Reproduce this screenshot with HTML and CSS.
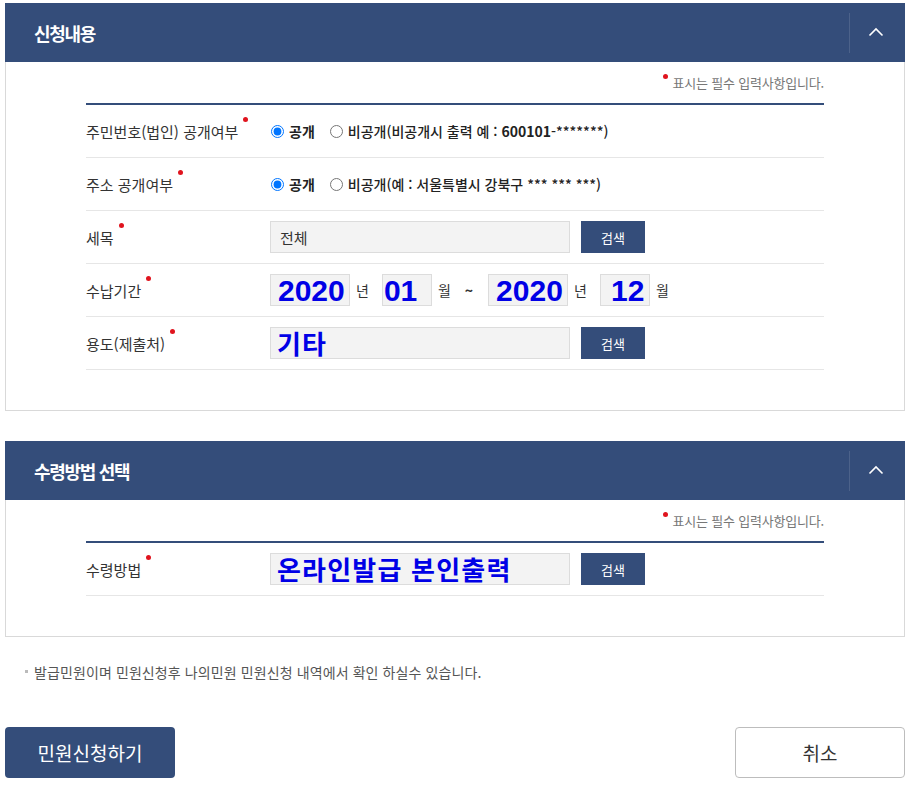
FILE: index.html
```html
<!DOCTYPE html>
<html lang="ko">
<head>
    <meta charset="UTF-8">
    <meta name="viewport" content="width=device-width, initial-scale=1.0">
    <title>민원신청</title>
    <link rel="stylesheet" href="styles.css">
</head>
<body>
    <div class="page">
        <!-- 신청내용 -->
        <section class="panel">
            <div class="panel-head">
                <h2 class="panel-title">신청내용</h2>
                <button class="panel-toggle" type="button" aria-label="접기">
                    <svg width="16" height="10" viewBox="0 0 16 10"><polyline points="1.5,8.5 8,2 14.5,8.5" fill="none" stroke="#fff" stroke-width="1.6"/></svg>
                </button>
            </div>
            <div class="panel-body">
                <p class="req-note"><span class="req-dot">표시는 필수 입력사항입니다.</span></p>
                <div class="form-table">
                    <div class="form-row">
                        <div class="form-label"><span class="req">주민번호(법인) 공개여부</span></div>
                        <div class="field">
                            <label class="radio"><input type="radio" name="open-id" checked><span class="strong">공개</span></label>
                            <label class="radio"><input type="radio" name="open-id"><span>비공개(비공개시 출력 예 : <b>600101</b>-*******)</span></label>
                        </div>
                    </div>
                    <div class="form-row">
                        <div class="form-label"><span class="req">주소 공개여부</span></div>
                        <div class="field">
                            <label class="radio"><input type="radio" name="open-addr" checked><span class="strong">공개</span></label>
                            <label class="radio"><input type="radio" name="open-addr"><span>비공개(예 : 서울특별시 강북구 *** *** ***)</span></label>
                        </div>
                    </div>
                    <div class="form-row">
                        <div class="form-label"><span class="req">세목</span></div>
                        <div class="field">
                            <div class="text-box">전체</div>
                            <button class="btn-search" type="button">검색</button>
                        </div>
                    </div>
                    <div class="form-row">
                        <div class="form-label"><span class="req">수납기간</span></div>
                        <div class="field">
                            <div class="text-box year"><span class="big">2020</span></div>
                            <span class="unit">년</span>
                            <div class="text-box month"><span class="big">01</span></div>
                            <span class="unit">월</span>
                            <span class="tilde">~</span>
                            <div class="text-box year"><span class="big">2020</span></div>
                            <span class="unit">년</span>
                            <div class="text-box month center"><span class="big">12</span></div>
                            <span class="unit">월</span>
                        </div>
                    </div>
                    <div class="form-row">
                        <div class="form-label"><span class="req">용도(제출처)</span></div>
                        <div class="field">
                            <div class="text-box"><span class="big kr">기타</span></div>
                            <button class="btn-search" type="button">검색</button>
                        </div>
                    </div>
                </div>
            </div>
        </section>

        <!-- 수령방법 선택 -->
        <section class="panel">
            <div class="panel-head">
                <h2 class="panel-title">수령방법 선택</h2>
                <button class="panel-toggle" type="button" aria-label="접기">
                    <svg width="16" height="10" viewBox="0 0 16 10"><polyline points="1.5,8.5 8,2 14.5,8.5" fill="none" stroke="#fff" stroke-width="1.6"/></svg>
                </button>
            </div>
            <div class="panel-body">
                <p class="req-note"><span class="req-dot">표시는 필수 입력사항입니다.</span></p>
                <div class="form-table">
                    <div class="form-row">
                        <div class="form-label"><span class="req">수령방법</span></div>
                        <div class="field">
                            <div class="text-box"><span class="big kr">온라인발급 본인출력</span></div>
                            <button class="btn-search" type="button">검색</button>
                        </div>
                    </div>
                </div>
            </div>
        </section>

        <p class="notice">발급민원이며 민원신청후 나의민원 민원신청 내역에서 확인 하실수 있습니다.</p>

        <div class="actions">
            <button class="btn btn-primary" type="button">민원신청하기</button>
            <button class="btn btn-cancel" type="button">취소</button>
        </div>
    </div>
</body>
</html>
```

FILE: styles.css
```css
:root {
    --navy: #344d7a;
    --red: #e0141e;
    --line: #e6e6e6;
    --text: #333333;
}

* {
    box-sizing: border-box;
}

body {
    margin: 0;
    font-family: "Noto Sans CJK KR", "Noto Sans", sans-serif;
    color: var(--text);
    background-color: #fff;
}

.page {
    width: 900px;
    margin-left: 5px;
    padding-top: 3px;
}

.panel + .panel {
    margin-top: 30px;
}

/* panel header */
.panel-head {
    display: flex;
    align-items: center;
    height: 59px;
    background-color: var(--navy);
}

.panel-title {
    flex: 1;
    margin: 0;
    padding-left: 29px;
    font-size: 18px;
    font-weight: 700;
    letter-spacing: -1.3px;
    color: #fff;
}

.panel-toggle {
    display: flex;
    align-items: center;
    justify-content: center;
    width: 56px;
    height: 40px;
    padding: 0 4px 2px 0;
    background: none;
    border: 0;
    border-left: 1px solid rgba(255, 255, 255, 0.12);
    cursor: pointer;
}

/* panel body */
.panel-body {
    border: 1px solid #d9d9d9;
    border-top: 0;
    padding: 11px 80px 40px;
}

.req-note {
    margin: 0 0 10px;
    text-align: right;
    font-size: 13px;
    line-height: 20px;
    letter-spacing: -0.2px;
    color: #777;
}

.req-dot {
    position: relative;
}

.req-dot::before {
    content: "";
    position: absolute;
    left: -10px;
    top: 1px;
    width: 5px;
    height: 5px;
    border-radius: 50%;
    background-color: var(--red);
}

.form-table {
    border-top: 2px solid var(--navy);
}

.form-row {
    display: flex;
    align-items: center;
    height: 53px;
    border-bottom: 1px solid var(--line);
}

.form-label {
    width: 184px;
    flex-shrink: 0;
    font-size: 15px;
    letter-spacing: 0;
}

.req {
    position: relative;
}

.req::after {
    content: "";
    position: absolute;
    right: -10px;
    top: -4px;
    width: 5px;
    height: 5px;
    border-radius: 50%;
    background-color: var(--red);
}

.field {
    display: flex;
    align-items: center;
}

/* radios */
.radio {
    display: inline-flex;
    align-items: center;
    gap: 5px;
    margin-right: 14px;
    font-size: 14px;
    font-weight: 500;
    color: #222;
}

.radio input {
    width: 13px;
    height: 13px;
    margin: 0 0 0 1px;
}

.radio .strong {
    font-weight: 700;
}

/* inputs */
.text-box {
    display: flex;
    align-items: center;
    width: 300px;
    height: 32px;
    padding: 0 9px;
    background-color: #f3f3f3;
    border: 1px solid #dcdcdc;
    font-size: 15px;
    white-space: nowrap;
}

.text-box.year {
    width: 80px;
    padding: 2px 0 0 7px;
}

.text-box.month {
    width: 50px;
    padding: 2px 0 0 1px;
}

.text-box.center {
    padding-left: 10px;
}

.big {
    font-family: "Liberation Sans", Arial, sans-serif;
    font-size: 30px;
    font-weight: 700;
    color: #0000e6;
    line-height: 1;
}

.big.kr {
    font-family: "Noto Sans CJK KR", sans-serif;
    font-size: 26px;
    letter-spacing: 1.2px;
    margin-left: -3px;
}

.unit {
    margin: 0 13px 0 6px;
    font-size: 14px;
}

.tilde {
    margin: 0 15px 0 1px;
    font-size: 14px;
    font-weight: 700;
}

.btn-search {
    width: 64px;
    height: 32px;
    margin-left: 11px;
    background-color: var(--navy);
    border: 0;
    color: #fff;
    font-family: inherit;
    font-size: 13px;
    cursor: pointer;
}

/* bottom */
.notice {
    position: relative;
    margin: 25px 0 0;
    padding-left: 29px;
    font-size: 14px;
    line-height: 20px;
    letter-spacing: 0.1px;
    color: #555;
}

.notice::before {
    content: "";
    position: absolute;
    left: 20px;
    top: 8px;
    width: 3px;
    height: 3px;
    background-color: #bbb;
}

.actions {
    display: flex;
    justify-content: space-between;
    margin-top: 45px;
}

.btn {
    width: 170px;
    height: 51px;
    border-radius: 4px;
    font-family: inherit;
    font-size: 19px;
    cursor: pointer;
}

.btn-primary {
    background-color: var(--navy);
    border: 0;
    color: #fff;
}

.btn-cancel {
    background-color: #fff;
    border: 1px solid #bdbdbd;
    color: var(--text);
}
```
